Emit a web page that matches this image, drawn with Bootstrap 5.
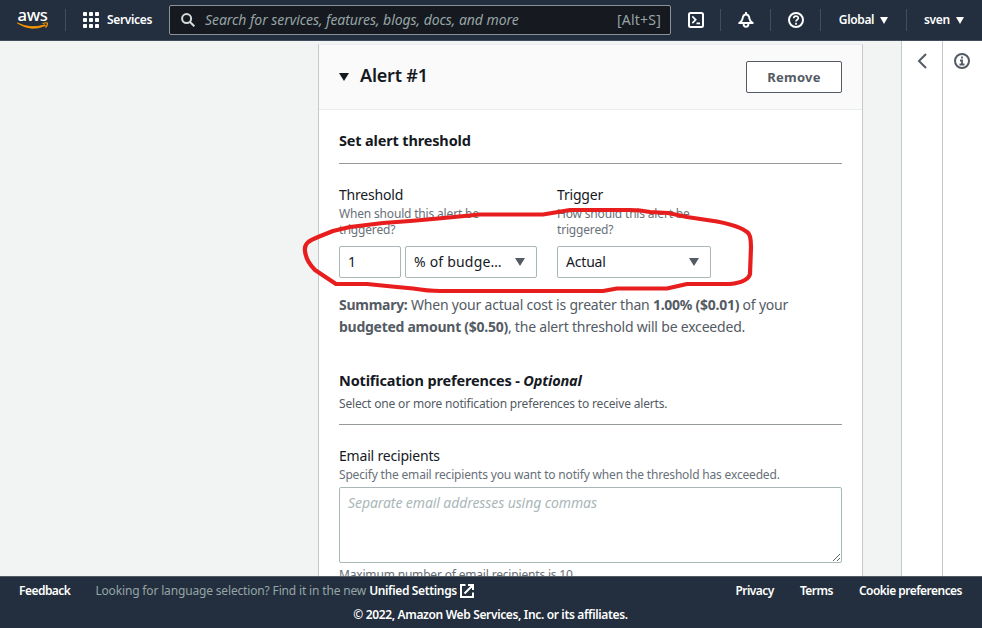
<!DOCTYPE html>
<html lang="en">
<head>
<meta charset="utf-8">
<meta name="viewport" content="width=device-width, initial-scale=1">
<title>AWS Budgets</title>
<link href="https://cdn.jsdelivr.net/npm/bootstrap@5.3.0/dist/css/bootstrap.min.css" rel="stylesheet">
<style>
body{font-family:"Noto Sans",sans-serif;font-size:14px;line-height:22px;letter-spacing:-.19px;color:#16191f;height:628px;background:#f2f3f3}
svg{display:block;flex-shrink:0}
.topbar{height:41px;background:#232f3e;border-bottom:1px solid #414d5c;color:#fff;font-size:12px;font-weight:600;line-height:20px;letter-spacing:-.35px}
.sep{width:1px;height:22px;background:#414d5c}
.logo{width:65px;padding-left:17px}
.services{width:103px;padding-left:17px;gap:8px}
.searchbox{width:502px;height:30px;background:#16191f;border:1px solid #879596;border-radius:2px;color:#95a5a6;font-size:14px;font-weight:400;letter-spacing:-.06px;padding:0 9px 0 11px}
.searchbox i{margin-left:10px}
.shortcut{letter-spacing:.22px}
.iconcell{width:49px}
.menu-region{width:85px;gap:6px}
.menu-user{width:75px;padding-left:17px;gap:6px}
.alert-panel{width:545px;margin-left:318px;margin-top:3px;background:#fff;border:1px solid #c4caca;border-top-color:#eaeded;border-bottom:0}
.panel-head{height:65px;background:#fafafa;border-bottom:1px solid #eaeded;padding:0 20px}
.panel-body{padding:19px 20px 0}
.remove{width:96px;height:32px;border:1px solid #545b64;border-radius:2px;background:#fff;color:#545b64;font-weight:700;font-size:13px;letter-spacing:.25px;padding:0}
.ttl{font-size:18px;font-weight:600;letter-spacing:-.2px;margin-left:11px;padding-bottom:4px}
.rule{height:1px;background:#959b9b}
.hint{font-size:12px;line-height:16px;color:#687078;letter-spacing:-.175px}
.field{height:32px;border:1px solid #aab7b8;border-radius:2px;padding:0 11px 0 8px}
.w-num{width:62px}
.w-unit{width:132px;letter-spacing:.2px}
.w-trig{width:154px}
.gray{color:#545b64}
.summary{letter-spacing:-.2px}
.summary b{letter-spacing:-.27px}
.sect{font-weight:700;font-size:14.5px;letter-spacing:-.16px}
.sect.opt{margin-top:31px}
.col-a{width:218px}
.fields{margin-top:20px}
textarea.mail{width:503px;height:76px;border:1px solid #aab7b8;border-radius:2px;padding:4px 8px;font-size:14px;letter-spacing:-.09px;resize:vertical;display:block}
textarea.mail::placeholder{color:#aab7b8;font-style:italic}
.rail{width:41px;background:#fff;border-left:1px solid #c4caca;padding-top:11px}
.rail.last{width:40px;padding-right:2px}
.foot{height:52px;background:#232f3e;border-top:1px solid #545b64;color:#fff;font-size:12px;font-weight:600;line-height:16px;letter-spacing:-.35px;padding:6px 20px 0 19px}
.foot .lang{margin-left:25px;margin-right:3px;color:#95a5a6;letter-spacing:-.16px}
.foot .links,.foot .fb{letter-spacing:-.53px}
.foot .links{gap:26px}
.t{white-space:nowrap}
.scribble{position:absolute;left:0;top:0;pointer-events:none}
</style>
</head>
<body class="d-flex flex-column overflow-hidden position-relative">
<header class="topbar d-flex align-items-center flex-shrink-0">
  <div class="logo"><svg width="32" height="28" viewBox="0 -3 32 28" overflow="visible"><text x="0.5" y="11.5" font-family="Noto Sans,sans-serif" font-size="16" font-weight="500" fill="#fff" textLength="30" lengthAdjust="spacingAndGlyphs">aws</text><path d="M0.300 14Q14 23 28.500 16.600L28 15.800Q14 20.500 0.300 14z" fill="#f90" stroke="#f90" stroke-width=".8"/><path d="M25.500 14.500q5-1.500 5 0q0 2-2 4.200" fill="none" stroke="#f90" stroke-width="1.200"/></svg></div>
  <div class="sep"></div>
  <div class="services d-flex align-items-center"><svg width="16" height="16" viewBox="0 0 16 16" fill="#fff"><g id="r"><rect width="4" height="4" rx=".8"/><rect x="6" width="4" height="4" rx=".8"/><rect x="12" width="4" height="4" rx=".8"/></g><use href="#r" y="6"/><use href="#r" y="12"/></svg><span class="t">Services</span></div>
  <div class="searchbox d-flex align-items-center"><svg width="14" height="14" viewBox="0 0 14 14" fill="none" stroke="#d5dbdb" stroke-width="2"><circle cx="5.6" cy="5.6" r="4.5"/><path d="M9 9l4.3 4.3"/></svg><i class="t me-auto">Search for services, features, blogs, docs, and more</i><span class="t shortcut">[Alt+S]</span></div>
  <div class="iconcell d-flex justify-content-center"><svg width="16" height="16" viewBox="0 0 16 16" fill="none" stroke="#fff" stroke-width="2"><rect x="1" y="1" width="14" height="14" rx="1.5"/><path d="M4.300 4.400L7.700 7.800l-3.400 3.400M8.500 11.300H12" stroke-width="1.700"/></svg></div>
  <div class="sep"></div>
  <div class="iconcell d-flex justify-content-center"><svg width="16" height="16" viewBox="0 0 16 16" fill="none" stroke="#fff" stroke-width="1.900" stroke-linejoin="round"><path d="M8 0v2M1.200 11H14.800Q12 9.500 11.500 7Q11 2.500 8 2.500T4.500 7Q4 9.500 1.200 11zM5.600 12a2.400 2.800 0 0 0 4.800 0"/></svg></div>
  <div class="sep"></div>
  <div class="iconcell d-flex justify-content-center"><svg width="16" height="16" viewBox="0 0 16 16" fill="none" stroke="#fff" stroke-width="2"><circle cx="8" cy="8" r="7"/><path d="M5.700 6.300C5.700 3.300 10.300 3.400 10.300 6.100C10.300 7.800 8 7.700 8 9.600M8 10.700v2" stroke-width="1.700"/></svg></div>
  <div class="sep"></div>
  <div class="menu-region d-flex align-items-center justify-content-center"><span class="t">Global</span><svg width="8" height="7"><path d="M0 0h8l-4 7z" fill="#fff"/></svg></div>
  <div class="sep"></div>
  <div class="menu-user d-flex align-items-center"><span class="t">sven</span><svg width="8" height="7"><path d="M0 0h8l-4 7z" fill="#fff"/></svg></div>
</header>
<div class="d-flex flex-grow-1 overflow-hidden">
  <main class="flex-grow-1 overflow-hidden">
    <section class="alert-panel">
      <div class="panel-head d-flex align-items-center">
        <svg width="10" height="8"><path d="M0 0h10l-5 8z" fill="#16191f"/></svg>
        <span class="ttl t me-auto">Alert #1</span>
        <button class="remove">Remove</button>
      </div>
      <div class="panel-body">
        <div class="sect t">Set alert threshold</div>
        <div class="rule" style="margin-top:12px"></div>
        <div class="fields d-flex">
          <div class="col-a"><div>Threshold</div>
            <div class="hint t">When should this alert be<br>triggered?</div>
            <div class="d-flex gap-1 mt-2"><div class="field w-num d-flex align-items-center">1</div><div class="field w-unit d-flex align-items-center"><span class="t me-auto">% of budge…</span><svg width="10" height="8"><path d="M0 0h10l-5 8z" fill="#545b64"/></svg></div></div></div>
          <div><div>Trigger</div>
            <div class="hint t">How should this alert be<br>triggered?</div>
            <div class="field w-trig d-flex align-items-center mt-2"><span class="t me-auto">Actual</span><svg width="10" height="8"><path d="M0 0h10l-5 8z" fill="#545b64"/></svg></div></div>
        </div>
        <div class="gray summary t mt-3"><b>Summary:</b> When your actual cost is greater than <b>1.00% ($0.01)</b> of your<br><b>budgeted amount ($0.50)</b>, the alert threshold will be exceeded.</div>
        <div class="sect opt t">Notification preferences - <i>Optional</i></div>
        <div class="hint gray t" style="margin-top:5px">Select one or more notification preferences to receive alerts.</div>
        <div class="rule" style="margin-top:12px"></div>
        <div style="margin-top:20px">Email recipients</div>
        <div class="hint t">Specify the email recipients you want to notify when the threshold has exceeded.</div>
        <textarea class="mail mt-1" placeholder="Separate email addresses using commas"></textarea>
        <div class="hint t mt-1">Maximum number of email recipients is 10.</div>
      </div>
    </section>
  </main>
  <aside class="rail d-flex justify-content-center flex-shrink-0"><svg width="16" height="18" viewBox="0 0 16 18" fill="none" stroke="#545b64" stroke-width="2"><path d="M12 2L5 9l7 7"/></svg></aside>
  <aside class="rail last d-flex justify-content-center flex-shrink-0"><svg width="16" height="18" viewBox="0 0 16 18" fill="none" stroke="#545b64" stroke-width="2"><circle cx="8" cy="9" r="7"/><path d="M8 4.500v2M6 8.500h2v4M5.500 12.500h5" stroke-width="1.800"/></svg></aside>
</div>
<footer class="foot flex-shrink-0">
  <div class="d-flex align-items-center"><span class="t fb">Feedback</span><span class="t fw-normal lang">Looking for language selection? Find it in the new</span><span class="t">Unified Settings</span>
  <svg width="14" height="14" viewBox="0 0 14 14" fill="none" stroke="#fff" stroke-width="2" style="margin-left:3px"><path d="M5.500 1H1v12h12V8.500M8 1h5v5M13 1L4.500 9.500"/></svg>
  <div class="links d-flex ms-auto t"><span>Privacy</span><span>Terms</span><span>Cookie preferences</span></div></div>
  <div class="text-center mt-2 t">© 2022, Amazon Web Services, Inc. or its affiliates.</div>
</footer>
<svg class="scribble" width="982" height="628" fill="none" stroke="#e81e1e" stroke-width="4.200" stroke-linejoin="round" stroke-linecap="round"><path d="M480 214.500L433 219L410 221L383 223L350 227L333 231L318 237C308 241 304 244 305 251Q306 261 315 270L336 284H367L397 287L413 288.500Q428 291 440 291H603L617 288.500H667L687 284H730Q748 282 750 274L751 247Q751 234 747 232Q740 226 717 221.500L687 217L668 213L650 212Q640 210 630 210H570L543 214.500z"/></svg>
<script src="https://cdn.jsdelivr.net/npm/bootstrap@5.3.0/dist/js/bootstrap.bundle.min.js"></script>
</body>
</html>
